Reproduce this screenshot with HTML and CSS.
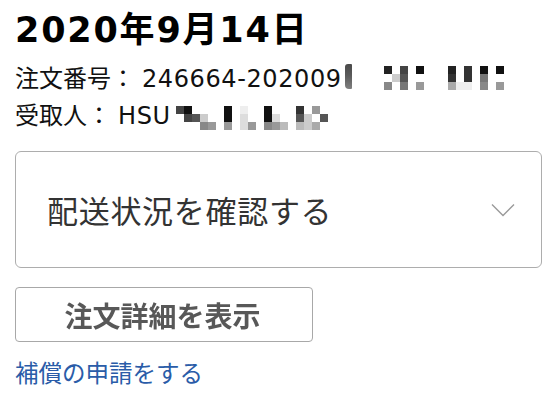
FILE: index.html
```html
<!DOCTYPE html>
<html lang="ja">
<head>
<meta charset="utf-8">
<title>注文</title>
<link rel="stylesheet" href="styles.css">
</head>
<body>
<main class="order">
  <h1 class="order-date">2020年9月14日</h1>
  <p class="meta">注文番号：<span class="val">246664-202009</span><span class="mask-bar"></span><span class="mask mask-num"><i class="px-b"></i><i class="px-o"></i><i class="px-g"></i><i class="px-o"></i><i class="px-k"></i><i class="px-o"></i><i class="px-d"></i><i class="px-e"></i><i class="px-f"></i><i class="px-o"></i><i class="px-o"></i><i class="px-o"></i><i class="px-a"></i><i class="px-o"></i><i class="px-h"></i><i class="px-o"></i><i class="px-o"></i><i class="px-o"></i><i class="px-o"></i><i class="px-o"></i><i class="px-o"></i><i class="px-o"></i><i class="px-o"></i><i class="px-o"></i><i class="px-b"></i><i class="px-c"></i><i class="px-i"></i><i class="px-o"></i><i class="px-o"></i><i class="px-m"></i><i class="px-c"></i><i class="px-c"></i><i class="px-m"></i><i class="px-o"></i><i class="px-o"></i><i class="px-o"></i><i class="px-a"></i><i class="px-f"></i><i class="px-g"></i><i class="px-o"></i><i class="px-o"></i><i class="px-o"></i><i class="px-a"></i><i class="px-o"></i><i class="px-h"></i></span></p>
  <p class="meta">受取人：<span class="val">HSU</span><span class="mask mask-name"><i class="px-d"></i><i class="px-o"></i><i class="px-o"></i><i class="px-a"></i><i class="px-d"></i><i class="px-o"></i><i class="px-o"></i><i class="px-e"></i><i class="px-o"></i><i class="px-o"></i><i class="px-k"></i><i class="px-g"></i><i class="px-o"></i><i class="px-o"></i><i class="px-h"></i><i class="px-o"></i><i class="px-o"></i><i class="px-o"></i><i class="px-a"></i><i class="px-a"></i><i class="px-h"></i><i class="px-o"></i><i class="px-o"></i><i class="px-o"></i><i class="px-m"></i><i class="px-l"></i><i class="px-l"></i><i class="px-o"></i><i class="px-o"></i><i class="px-h"></i><i class="px-o"></i><i class="px-o"></i><i class="px-o"></i><i class="px-a"></i><i class="px-a"></i><i class="px-g"></i><i class="px-o"></i><i class="px-l"></i><i class="px-h"></i><i class="px-o"></i><i class="px-o"></i><i class="px-j"></i><i class="px-o"></i><i class="px-o"></i><i class="px-o"></i><i class="px-c"></i><i class="px-e"></i><i class="px-j"></i><i class="px-o"></i><i class="px-k"></i><i class="px-k"></i><i class="px-h"></i><i class="px-o"></i><i class="px-i"></i><i class="px-o"></i><i class="px-e"></i><i class="px-o"></i></span></p>

  <div class="tracking">
    <span class="tracking-label">配送状況を確認する</span>
    <svg class="chevron" width="24" height="14" viewBox="0 0 24 14" aria-hidden="true"><polyline points="1,1.5 12,12.5 23,1.5" fill="none" stroke="#9a9a9a" stroke-width="1.4"/></svg>
  </div>

  <button class="detail-btn" type="button"><span class="detail-label">注文詳細を表示</span></button>

  <a class="claim-link" href="#">補償の申請をする</a>
</main>
</body>
</html>
```

FILE: styles.css
```css
html, body {
  margin: 0;
  padding: 0;
  background: #ffffff;
}

body {
  font-family: "DejaVu Sans", "Noto Sans CJK JP", sans-serif;
  color: #111111;
}

.order {
  padding: 10px 12px 0 15px;
}

.order-date {
  margin: 0 0 11px 0;
  font-size: 35px;
  line-height: 40px;
  font-weight: 700;
  letter-spacing: 1.8px;
  color: #000000;
}

.meta {
  margin: 0;
  height: 37px;
  font-size: 24px;
  line-height: 37px;
  color: #111111;
  white-space: nowrap;
}

.val {
  margin-left: 7px;
  letter-spacing: 0.6px;
}

.mask-bar {
  display: inline-block;
  width: 7px;
  height: 25px;
  margin-left: 3px;
  vertical-align: -2px;
  border-radius: 3px 1px 1px 4px;
  background: linear-gradient(#4a4a4a, #5a5a5a 45%, #808080);
}

.mask {
  display: inline-grid;
  grid-template-rows: repeat(3, 8px);
  grid-auto-columns: 8px;
  grid-auto-flow: column;
  vertical-align: top;
  filter: blur(0.3px);
}

.mask-num {
  margin-left: 32px;
  margin-top: 5px;
}

.mask-name {
  margin-left: 5px;
  margin-top: 8px;
}

.mask i { display: block; }
.px-o { background: transparent; }
.px-a { background: #111111; }
.px-b { background: #222222; }
.px-c { background: #333333; }
.px-d { background: #444444; }
.px-e { background: #555555; }
.px-f { background: #777777; }
.px-g { background: #888888; }
.px-h { background: #999999; }
.px-i { background: #aaaaaa; }
.px-j { background: #bbbbbb; }
.px-k { background: #cccccc; }
.px-l { background: #dddddd; }
.px-m { background: #eeeeee; }

.tracking {
  margin-top: 16px;
  height: 117px;
  box-sizing: border-box;
  border: 1.5px solid #adadad;
  border-radius: 6px;
  display: flex;
  align-items: center;
  justify-content: space-between;
  padding: 0 26px 0 31px;
}

.tracking-label {
  font-family: "Noto Sans CJK JP", sans-serif;
  font-size: 31px;
  line-height: 40px;
  letter-spacing: 0.7px;
  color: #333333;
}

.chevron {
  display: block;
  flex: none;
}

.detail-btn {
  display: flex;
  align-items: center;
  justify-content: center;
  margin-top: 19px;
  width: 298px;
  height: 55px;
  box-sizing: border-box;
  padding: 0;
  background: #ffffff;
  border: 1.5px solid #a8a8a8;
  border-radius: 4px;
  font-family: "Noto Sans CJK JP", sans-serif;
  font-size: 28px;
  line-height: 36px;
  font-weight: 700;
  color: #585858;
}

.detail-label {
  filter: blur(0.45px);
  margin-right: 3px;
}

.claim-link {
  display: block;
  margin-top: 15px;
  font-family: "Noto Sans CJK JP", sans-serif;
  font-size: 23.5px;
  line-height: 30px;
  color: #2a5ca8;
  text-decoration: none;
}
```
